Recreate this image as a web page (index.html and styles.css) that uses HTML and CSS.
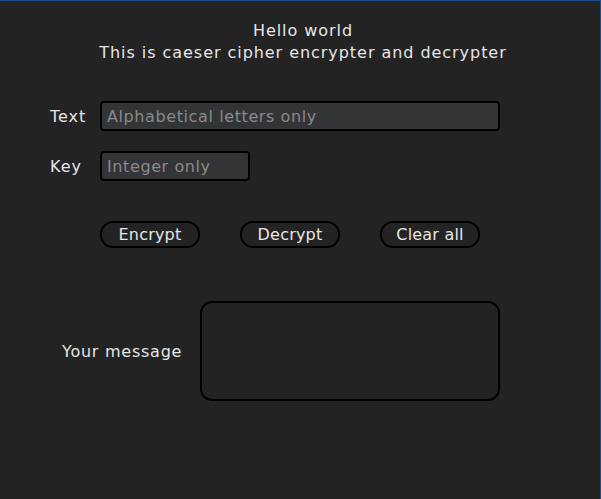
FILE: index.html
```html
<!DOCTYPE html>
<html>
<head>
<meta charset="utf-8">
<link rel="stylesheet" href="styles.css">
</head>
<body>
<div class="app">
  <header class="title">
    <div>Hello world</div>
    <div>This is caeser cipher encrypter and decrypter</div>
  </header>
  <div class="row row-text">
    <label class="label">Text</label>
    <input class="field field-text" type="text" placeholder="Alphabetical letters only">
  </div>
  <div class="row row-key">
    <label class="label">Key</label>
    <input class="field field-key" type="text" placeholder="Integer only">
  </div>
  <div class="buttons">
    <button class="btn">Encrypt</button>
    <button class="btn">Decrypt</button>
    <button class="btn">Clear all</button>
  </div>
  <div class="result">
    <span class="result-label">Your message</span>
    <div class="result-box"></div>
  </div>
</div>
</body>
</html>
```

FILE: styles.css
```css
html, body {
  margin: 0;
  padding: 0;
  background: #232323;
}
.app {
  box-sizing: border-box;
  width: 601px;
  height: 499px;
  border-top: 1px solid #1c4f8a;
  border-right: 1px solid #1c4f8a;
  background: #232323;
  color: #e6e6e6;
  font-family: "DejaVu Sans", Verdana, sans-serif;
  font-size: 16px;
}
.title {
  text-align: center;
  padding-top: 19px;
  padding-left: 6px;
  line-height: 22px;
  font-size: 16px;
  letter-spacing: 0.95px;
}
.row {
  display: flex;
  align-items: center;
  padding-left: 50px;
}
.row-text { margin-top: 37px; }
.row-key { margin-top: 20px; }
.label {
  width: 50px;
  font-size: 16px;
  letter-spacing: 1px;
}
.field {
  box-sizing: border-box;
  height: 30px;
  border: 2px solid #000;
  border-radius: 4px;
  background: #333436;
  color: #e6e6e6;
  font-family: "DejaVu Sans", Verdana, sans-serif;
  font-size: 16px;
  letter-spacing: 0.6px;
  padding: 0 5px;
  outline: none;
}
.field::placeholder { color: #8a8a8a; }
.field-text { width: 400px; }
.field-key { width: 150px; }
.buttons {
  display: flex;
  gap: 40px;
  padding-left: 100px;
  margin-top: 40px;
}
.btn {
  box-sizing: border-box;
  width: 100px;
  height: 27px;
  border: 2px solid #000;
  border-radius: 13px;
  background: #232323;
  color: #e6e6e6;
  font-family: "DejaVu Sans", Verdana, sans-serif;
  font-size: 16px;
  letter-spacing: 0.2px;
  padding: 0;
}
.result {
  display: flex;
  align-items: center;
  margin-top: 53px;
  padding-left: 62px;
}
.result-label {
  width: 138px;
  font-size: 16px;
  letter-spacing: 0.75px;
}
.result-box {
  box-sizing: border-box;
  width: 300px;
  height: 100px;
  border: 2px solid #000;
  border-radius: 12px;
}
```
